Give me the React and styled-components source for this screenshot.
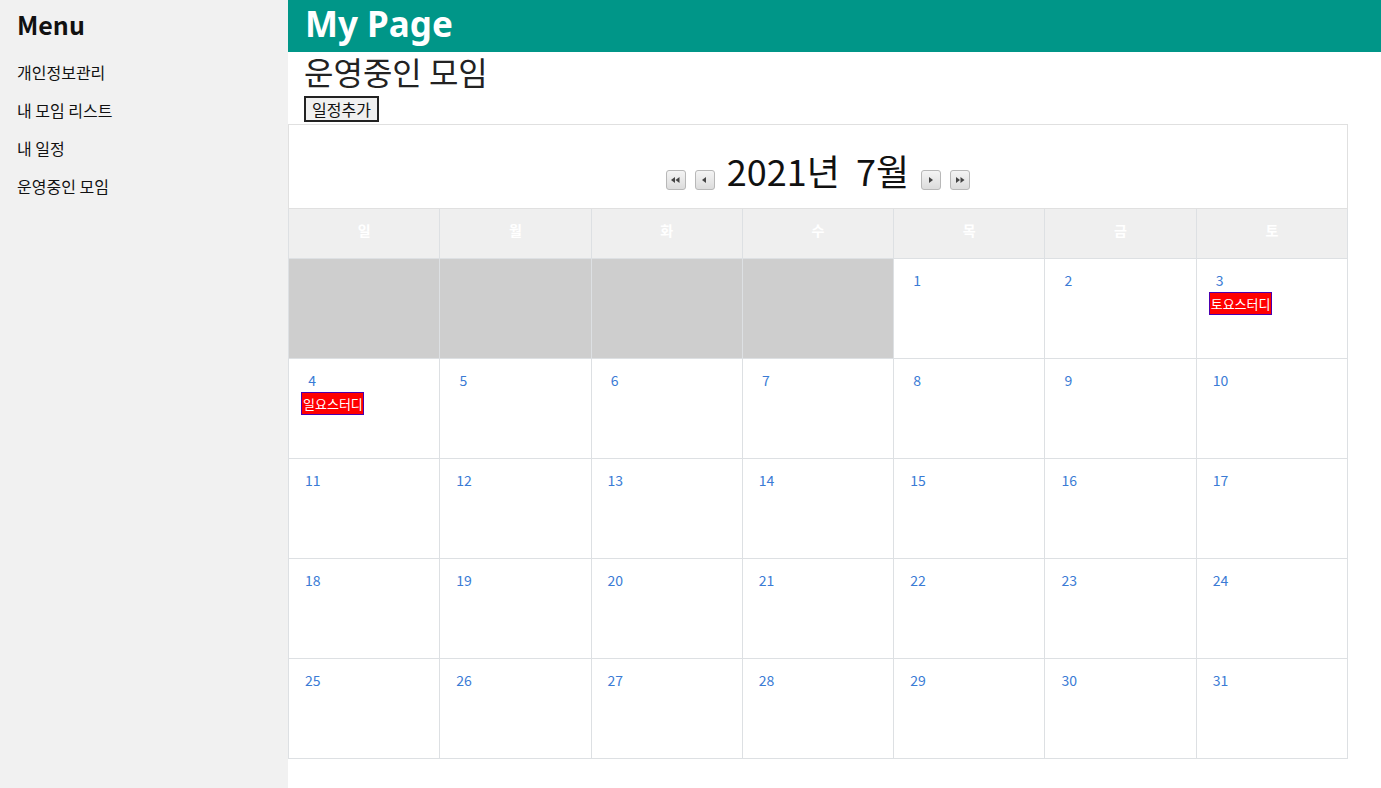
import React from "react";
import styled, { createGlobalStyle } from "styled-components";

const Global = createGlobalStyle`
  html, body { margin: 0; padding: 0; background: #fff; }
  body { font-family: "Noto Sans CJK KR", "Noto Sans", sans-serif; color: #111; }
`;

const Layout = styled.div`
  display: flex;
  min-height: 100vh;
`;

const Sidebar = styled.aside`
  width: 288px;
  flex: none;
  background: #f1f1f1;
  padding: 0 17px;
  box-sizing: border-box;
`;

const MenuTitle = styled.h3`
  margin: 0;
  padding-top: 8px;
  font-size: 25px;
  font-weight: 700;
  line-height: 32px;
  height: 45px;
`;

const MenuList = styled.ul`
  list-style: none;
  margin: 0;
  padding: 0;
  display: flex;
  flex-direction: column;
`;

const MenuItem = styled.li`
  font-size: 16px;
  line-height: 38px;
  height: 38px;
`;

const Main = styled.main`
  flex: 1;
  display: flex;
  flex-direction: column;
`;

const Header = styled.header`
  background: #009688;
  color: #fff;
  height: 52px;
  padding-left: 17px;
  font-size: 35px;
  font-weight: 700;
  line-height: 48px;
  font-family: "Noto Sans", "Noto Sans CJK KR", sans-serif;
`;

const Content = styled.div`
  padding: 0;
`;

const PageTitle = styled.h2`
  margin: 0;
  padding-left: 16px;
  font-size: 32px;
  font-weight: 400;
  line-height: 38px;
  color: #222;
`;

const AddButton = styled.button`
  margin: 6px 0 2px 16px;
  height: 26px;
  padding: 0 6px;
  font-family: inherit;
  font-size: 16px;
  line-height: 20px;
  background: #f0f0f0;
  border: 2px solid #222;
  border-radius: 0;
  color: #111;
`;

const Calendar = styled.table`
  width: 1060px;
  border-collapse: collapse;
  table-layout: fixed;
`;

const TitleCell = styled.td`
  height: 84px;
  border: 1px solid #e0e0e0;
  text-align: center;
  vertical-align: middle;
  padding: 6px 0 0;
  box-sizing: border-box;
`;

const TitleRow = styled.div`
  display: inline-flex;
  align-items: center;
  gap: 9px;
`;

const MonthLabel = styled.span`
  font-size: 36px;
  line-height: 44px;
  padding: 0 3px;
  white-space: pre;
`;

const NavBtn = styled.span`
  width: 20px;
  height: 20px;
  box-sizing: border-box;
  border: 1px solid #b8b8b8;
  border-radius: 3px;
  background: linear-gradient(#f4f4f4, #dcdcdc);
  display: inline-flex;
  align-items: center;
  justify-content: center;
  margin-top: 20px;
`;

const DayHead = styled.th`
  height: 50px;
  padding: 0 0 8px;
  box-sizing: border-box;
  background: #efefef;
  color: #fff;
  border: 1px solid #dde0e3;
  font-size: 14px;
  font-weight: 700;
`;

const DayCell = styled.td`
  height: 100px;
  border: 1px solid #dde0e3;
  background: ${(p) => (p.$empty ? "#cecece" : "#fff")};
  vertical-align: top;
  padding: 11px 0 0 12px;
  box-sizing: border-box;
`;

const DayNum = styled.div`
  color: #3a7bd5;
  font-size: 14px;
  line-height: 20px;
  padding-left: 4px;
  white-space: pre;
`;

const EventTag = styled.span`
  display: inline-block;
  margin-top: 0;
  background: #ff0000;
  color: #fff;
  border: 1px solid #4a00b0;
  font-size: 13px;
  line-height: 21px;
  padding: 0 0 0 1px;
`;

const Arrow = ({ dir, dbl }) => {
  const tri = (x) =>
    dir === "l"
      ? `M${x + 4} 1 L${x} 4 L${x + 4} 7 Z`
      : `M${x} 1 L${x + 4} 4 L${x} 7 Z`;
  return (
    <svg width={dbl ? 9 : 5} height="8" viewBox={`0 0 ${dbl ? 9 : 5} 8`}>
      <path d={tri(0)} fill="#444" />
      {dbl && <path d={tri(4.5)} fill="#444" />}
    </svg>
  );
};

const events = { 3: "토요스터디", 4: "일요스터디" };

export default function App() {
  const cells = [];
  for (let i = 0; i < 4; i++) cells.push(null);
  for (let d = 1; d <= 31; d++) cells.push(d);
  const weeks = [];
  for (let i = 0; i < cells.length; i += 7) weeks.push(cells.slice(i, i + 7));
  const days = ["일", "월", "화", "수", "목", "금", "토"];

  return (
    <>
      <Global />
      <Layout>
        <Sidebar>
          <MenuTitle>Menu</MenuTitle>
          <MenuList>
            <MenuItem>개인정보관리</MenuItem>
            <MenuItem>내 모임 리스트</MenuItem>
            <MenuItem>내 일정</MenuItem>
            <MenuItem>운영중인 모임</MenuItem>
          </MenuList>
        </Sidebar>
        <Main>
          <Header>My Page</Header>
          <Content>
            <PageTitle>운영중인 모임</PageTitle>
            <AddButton>일정추가</AddButton>
            <Calendar>
              <tbody>
                <tr>
                  <TitleCell colSpan={7}>
                    <TitleRow>
                      <NavBtn><Arrow dir="l" dbl /></NavBtn>
                      <NavBtn><Arrow dir="l" /></NavBtn>
                      <MonthLabel>2021년  7월</MonthLabel>
                      <NavBtn><Arrow dir="r" /></NavBtn>
                      <NavBtn><Arrow dir="r" dbl /></NavBtn>
                    </TitleRow>
                  </TitleCell>
                </tr>
                <tr>
                  {days.map((d) => (
                    <DayHead key={d}>{d}</DayHead>
                  ))}
                </tr>
                {weeks.map((w, wi) => (
                  <tr key={wi}>
                    {w.map((d, di) =>
                      d === null ? (
                        <DayCell key={di} $empty />
                      ) : (
                        <DayCell key={di}>
                          <DayNum>{d < 10 ? ` ${d}` : `${d}`}</DayNum>
                          {events[d] && <EventTag>{events[d]}</EventTag>}
                        </DayCell>
                      )
                    )}
                  </tr>
                ))}
              </tbody>
            </Calendar>
          </Content>
        </Main>
      </Layout>
    </>
  );
}
